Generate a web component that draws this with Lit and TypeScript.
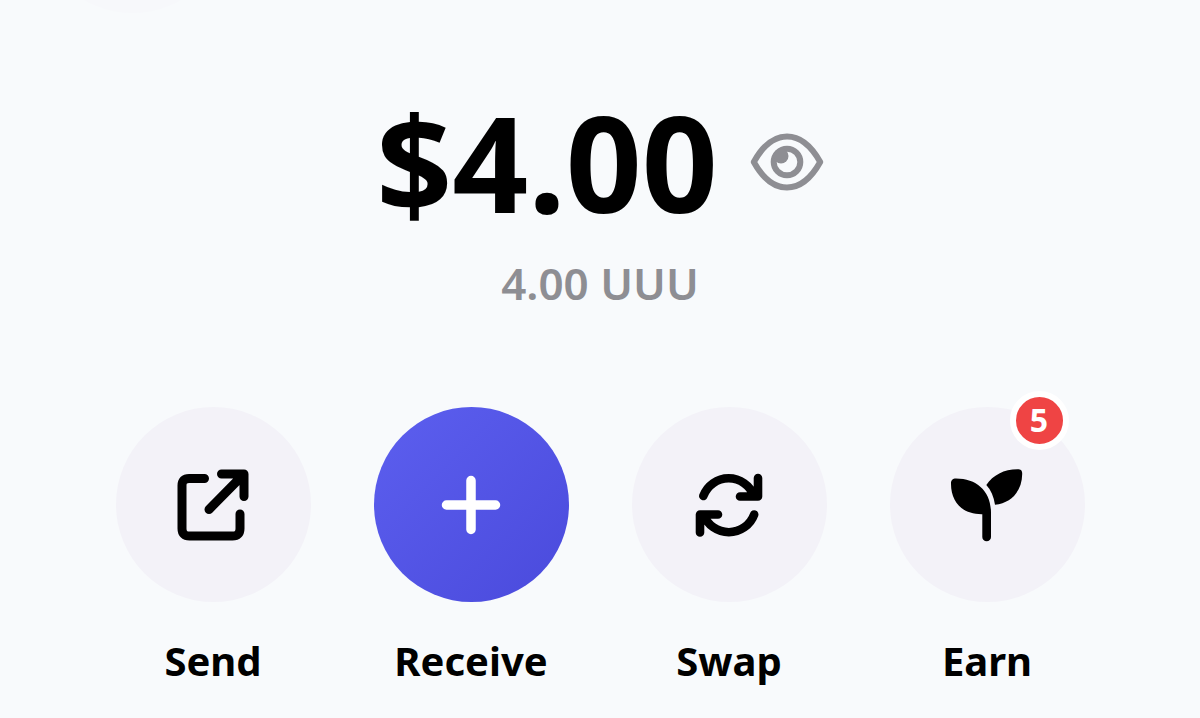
import { LitElement, html, css, svg, nothing, TemplateResult } from "lit";
import { customElement, property, state } from "lit/decorators.js";

const icons: Record<string, TemplateResult> = {
  send: svg`
    <g transform="translate(1.500 0.500)" fill="none" stroke="currentColor" stroke-width="9" stroke-linecap="round" stroke-linejoin="round">
      <path d="M40 23H24.500Q17.500 23 17.500 30V73Q17.500 80.500 25 80.500H68Q75.500 80.500 75.500 73V58.500"/>
      <path d="M57 18.500H79.500V41M78 20L44.500 54"/>
    </g>`,
  receive: svg`
    <path d="M50 25.500V74.500M25.500 50H74.500" fill="none" stroke="currentColor" stroke-width="9.500" stroke-linecap="round"/>`,
  swap: svg`
    <g transform="translate(1 0.500)" fill="none" stroke="currentColor" stroke-width="8.600" stroke-linecap="round" stroke-linejoin="round">
      <path d="M23.300 40.500A27 27 0 0 1 74 40.500M60 41H78V22.500"/>
      <path d="M74.200 59A27 27 0 0 1 23.500 59M38 59H20V77"/>
    </g>`,
  earn: svg`
    <g transform="translate(-2 -4.500)" fill="currentColor">
      <path d="M16 33.500C15.900 29.500 17.500 28 21 28C42 28 56 41 56 62V86.500A4.200 4.200 0 0 1 47.300 86.500V63.700C28 64 16 52 16 33.500Z"/>
      <path d="M51.300 34.500C58 24.500 69 18.700 82.500 18.700C86 18.700 87.300 20 87.200 23.500C87 40 77 52.500 60 54.300C58.800 46 56 39.500 51.300 34.500Z"/>
    </g>`,
};

@customElement("wallet-action")
class WalletAction extends LitElement {
  @property() label = "";
  @property() icon = "send";
  @property({ type: Boolean }) primary = false;
  @property({ type: Number }) count = 0;

  static styles = css`
    :host { display: block; }
    .action {
      display: flex;
      flex-direction: column;
      align-items: center;
      gap: 31px;
      width: 100%;
      padding: 0;
      border: 0;
      background: none;
      color: #000;
      font: 700 40px/56px "Noto Sans", sans-serif;
      cursor: pointer;
    }
    .disc {
      position: relative;
      display: grid;
      place-items: center;
      width: 100%;
      aspect-ratio: 1;
      border-radius: 50%;
      background: #f3f2f8;
    }
    .primary {
      background: linear-gradient(135deg, #5c5fef, #4a4adc);
      color: #fff;
    }
    .icon { display: block; width: 100px; height: 100px; }
    .badge {
      position: absolute;
      top: -16px;
      right: 16px;
      width: 47px;
      height: 47px;
      border: 6px solid #fff;
      border-radius: 50%;
      background: #ef4444;
      color: #fff;
      font-size: 32px;
      line-height: 46px;
      text-align: center;
    }
  `;

  render() {
    return html`
      <button class="action" type="button">
        <span class="disc ${this.primary ? "primary" : ""}">
          <svg class="icon" viewBox="0 0 100 100" aria-hidden="true">${icons[this.icon]}</svg>
          ${this.count ? html`<span class="badge">${this.count}</span>` : nothing}
        </span>
        <span>${this.label}</span>
      </button>
    `;
  }
}

@customElement("app-root")
class AppRoot extends LitElement {
  @state() private concealed = false;

  static styles = css`
    :host {
      display: block;
      min-height: 100vh;
      box-sizing: border-box;
      padding: 95px 24px 24px;
      position: relative;
      overflow: hidden;
      background: #f8fafc;
      color: #000;
      font-family: "Noto Sans", sans-serif;
    }
    :host::before {
      content: "";
      position: absolute;
      left: 35px;
      top: -182px;
      width: 195px;
      height: 195px;
      border-radius: 50%;
      background: #f7f8fb;
    }
    .balance {
      display: flex;
      justify-content: center;
      align-items: center;
      gap: 32px;
    }
    .amount {
      margin: 0;
      font-size: 133px;
      line-height: 134px;
      font-weight: 700;
    }
    .toggle {
      padding: 0;
      border: 0;
      background: none;
      color: #8e8e93;
      cursor: pointer;
    }
    .eye { display: block; width: 74px; height: 60px; }
    .tokens {
      margin: 24px 0 94px;
      color: #8e8e93;
      font-size: 44px;
      line-height: 60px;
      font-weight: 600;
      text-align: center;
    }
    .actions {
      display: grid;
      grid-template-columns: repeat(4, 1fr);
      gap: 63px;
      max-width: 969px;
      margin: 0 auto;
    }
  `;

  render() {
    return html`
      <div class="balance">
        <h1 class="amount">${this.concealed ? "••••" : "$4.00"}</h1>
        <button class="toggle" type="button" aria-label="Toggle balance"
          @click=${() => (this.concealed = !this.concealed)}>
          <svg class="eye" viewBox="0 0 74 60" aria-hidden="true">
            <path d="M3.800 30Q18 4.500 37 4.500T70.200 30Q56 55.500 37 55.500T3.800 30Z"
              fill="none" stroke="currentColor" stroke-width="6" stroke-linejoin="round"/>
            <circle cx="37" cy="30" r="13.300" fill="none" stroke="currentColor" stroke-width="6"/>
            <circle cx="31" cy="24" r="7.500" fill="currentColor"/>
          </svg>
        </button>
      </div>
      <p class="tokens">4.00 UUU</p>
      <nav class="actions">
        <wallet-action icon="send" label="Send"></wallet-action>
        <wallet-action icon="receive" label="Receive" primary></wallet-action>
        <wallet-action icon="swap" label="Swap"></wallet-action>
        <wallet-action icon="earn" label="Earn" count="5"></wallet-action>
      </nav>
    `;
  }
}
